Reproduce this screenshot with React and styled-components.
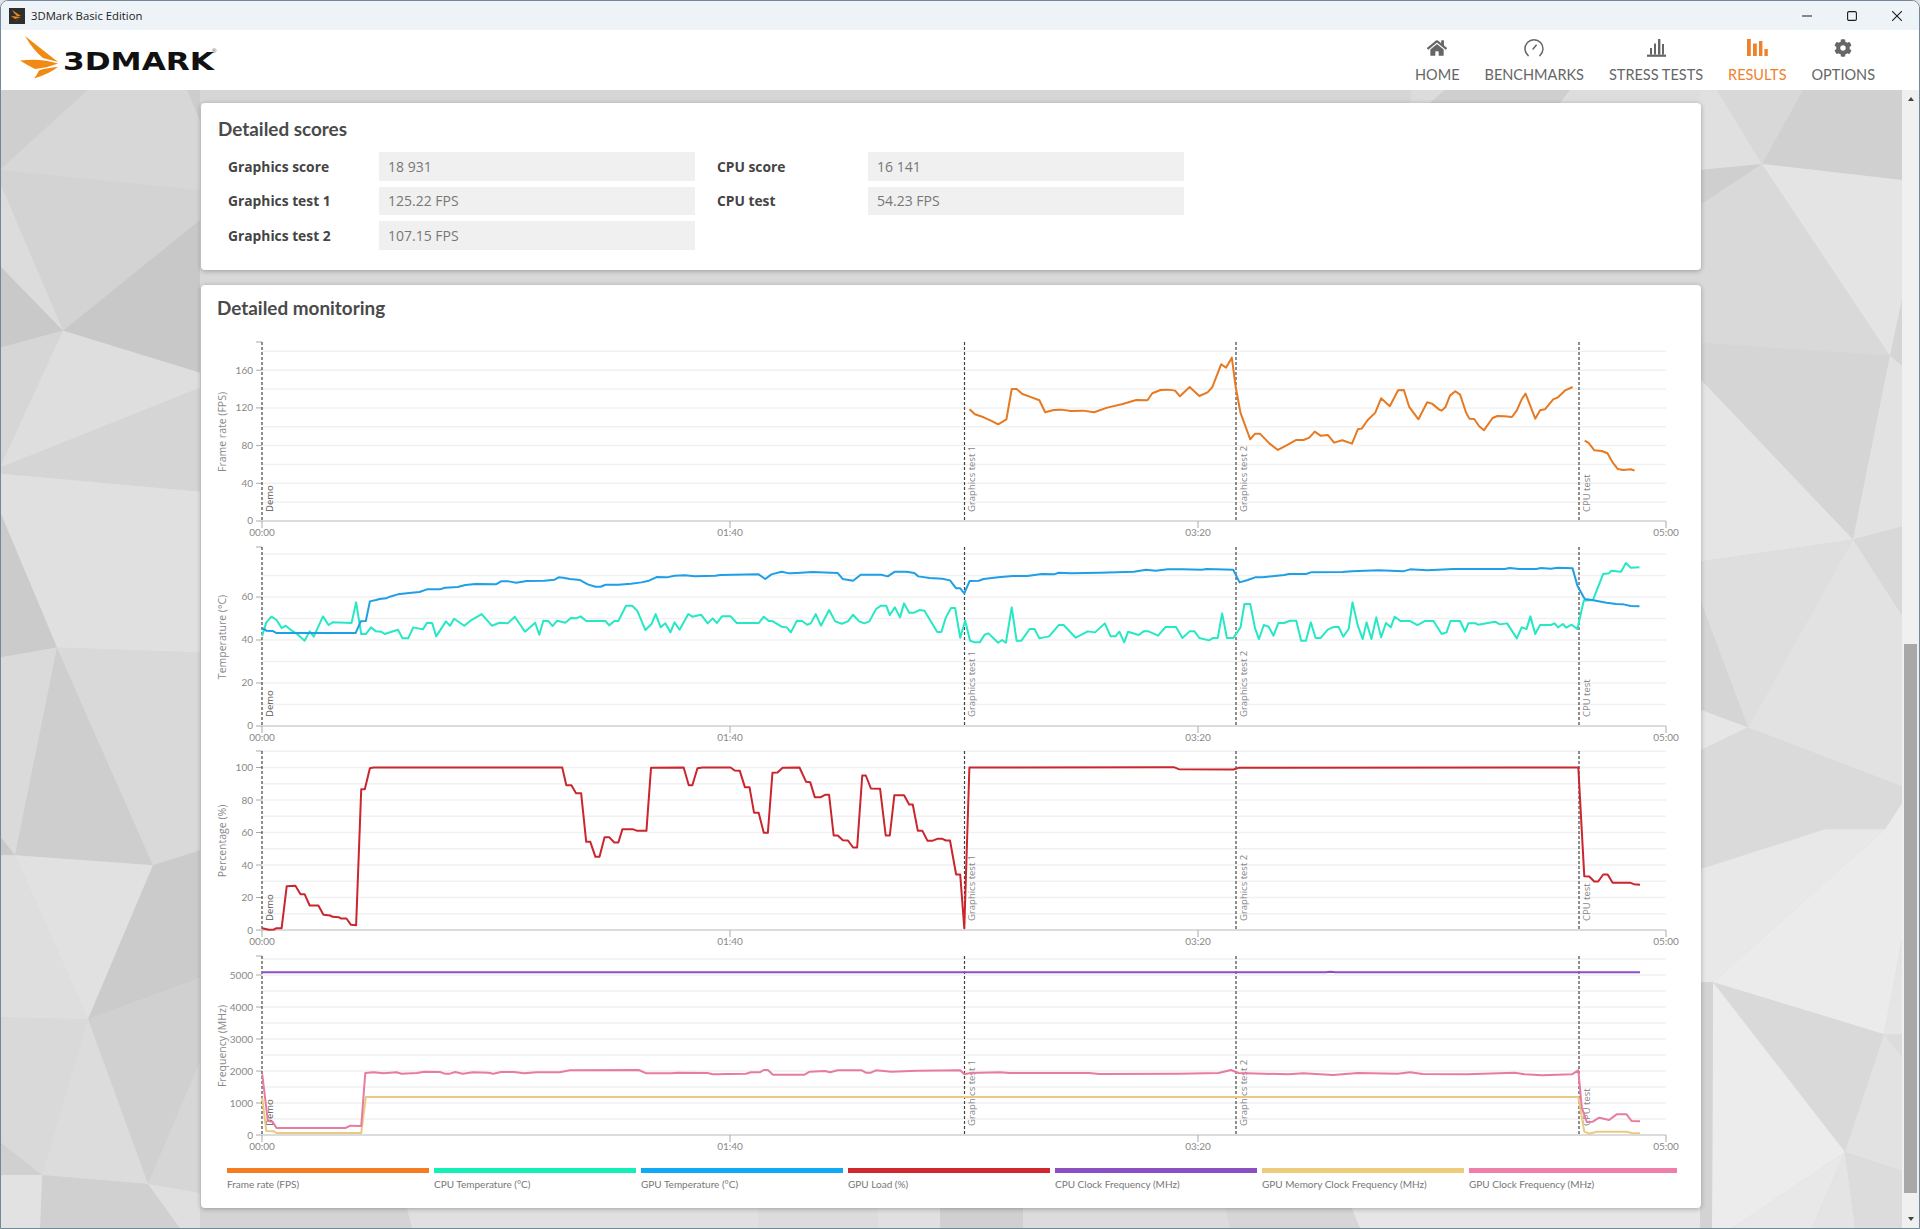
import React from "react";
import styled, { createGlobalStyle } from "styled-components";
import { FaHome, FaCog } from "react-icons/fa";

const GlobalStyle = createGlobalStyle`
html, body {
    margin: 0;
    padding: 0;
    background: #dfe3e8;
    overflow: hidden;
}
* {
    box-sizing: border-box;
}
`;

// background facets, in page pixels
const facets = [
    ["#cfcfcf", "0,90 88,90 0,170"],
    ["#d7d7d7", "88,90 187,90 200,121 200,190 0,170"],
    ["#cdcdcd", "187,90 200,90 200,121"],
    ["#d3d3d3", "0,170 200,190 200,220 63,331 0,183"],
    ["#dcdcdc", "0,183 63,331 0,266"],
    ["#c9c9c9", "0,266 63,331 0,348"],
    ["#c8c8c8", "63,331 200,220 200,373"],
    ["#d6d6d6", "0,348 63,331 0,468"],
    ["#dedede", "0,468 63,331 200,373 200,388"],
    ["#d5d5d5", "0,468 200,388 200,492 0,474"],
    ["#e0e0e0", "0,474 200,492 200,653 57,648 0,512"],
    ["#cbcbcb", "0,512 57,648 0,658"],
    ["#dadada", "0,658 57,648 15,856 0,837"],
    ["#cecece", "57,648 153,866 15,856"],
    ["#d9d9d9", "57,648 200,653 200,851 153,866"],
    ["#c9c9c9", "0,837 15,856 0,856"],
    ["#dedede", "0,856 15,856 88,1020 0,1018"],
    ["#e1e1e1", "15,856 153,866 88,1020"],
    ["#cbcbcb", "153,866 200,851 200,979 88,1020"],
    ["#d0d0d0", "88,1020 200,979 200,1063 148,1185"],
    ["#d9d9d9", "0,1018 88,1020 42,1176 0,1143"],
    ["#d0d0d0", "0,1143 42,1176 0,1176"],
    ["#dcdcdc", "88,1020 148,1185 42,1176"],
    ["#d6d6d6", "148,1185 200,1063 200,1194"],
    ["#d0d0d0", "42,1176 148,1185 180,1229 40,1229"],
    ["#e2e2e2", "0,1176 42,1176 40,1229 0,1229"],
    ["#dfdfdf", "148,1185 200,1194 200,1229 180,1229"],

    ["#d6d6d6", "200,90 1411,90 1411,103 200,103"],
    ["#dcdcdc", "1411,90 1445,90 1430,103 1411,103"],
    ["#cfcfcf", "1445,90 1570,90 1560,103 1430,103"],
    ["#dddddd", "1570,90 1700,90 1700,103 1560,103"],
    ["#d8d8d8", "200,268 1700,268 1700,288 200,288"],
    ["#d4d4d4", "200,1205 406,1205 412,1229 200,1229"],
    ["#e0e0e0", "406,1205 758,1205 758,1229 412,1229"],
    ["#dcdcdc", "758,1205 878,1205 878,1229 758,1229"],
    ["#e0e0e0", "878,1205 1023,1205 1023,1229 878,1229"],
    ["#d0d0d0", "940,1205 1023,1205 1023,1229 940,1229"],
    ["#dcdcdc", "1023,1205 1225,1205 1230,1229 1023,1229"],
    ["#d6d6d6", "1225,1205 1350,1205 1360,1229 1230,1229"],
    ["#e6e6e6", "1350,1205 1712,1205 1712,1229 1360,1229"],

    ["#e0e0e0", "1700,90 1717,90 1762,164 1700,170"],
    ["#d8d8d8", "1717,90 1803,90 1762,164"],
    ["#d0d0d0", "1803,90 1902,90 1902,180 1762,164"],
    ["#cfcfcf", "1700,170 1762,164 1700,205"],
    ["#d9d9d9", "1700,205 1762,164 1890,356 1700,343"],
    ["#e4e4e4", "1762,164 1902,180 1902,300 1890,356"],
    ["#d5d5d5", "1902,300 1890,356 1902,366"],
    ["#d5d5d5", "1700,343 1890,356 1853,540 1700,379"],
    ["#e5e5e5", "1700,379 1853,540 1700,562"],
    ["#e2e2e2", "1890,356 1902,366 1902,527 1853,540"],
    ["#d8d8d8", "1853,540 1902,527 1902,616"],
    ["#dedede", "1700,562 1853,540 1748,728 1700,600"],
    ["#d5d5d5", "1700,600 1748,728 1700,710"],
    ["#e6e6e6", "1700,710 1748,728 1700,751"],
    ["#e2e2e2", "1853,540 1902,616 1902,787 1748,728"],
    ["#dadada", "1700,751 1748,728 1902,787 1902,804 1885,830 1825,830 1702,870 1700,870"],
    ["#e8e8e8", "1700,870 1825,830 1885,830 1713,983 1700,983"],
    ["#ebebeb", "1885,830 1902,804 1902,940 1884,1035 1713,983"],
    ["#e5e5e5", "1902,940 1884,1035 1902,1040"],
    ["#d9d9d9", "1713,983 1884,1035 1845,1153"],
    ["#e2e2e2", "1884,1035 1902,1057 1902,1172 1845,1153"],
    ["#dcdcdc", "1884,1035 1902,1035 1902,1057"],
    ["#ececec", "1713,983 1845,1153 1732,1229 1712,1229"],
    ["#e8e8e8", "1845,1153 1812,1229 1732,1229"],
    ["#e4e4e4", "1845,1153 1855,1229 1812,1229"],
    ["#dcdcdc", "1845,1153 1902,1172 1902,1229 1855,1229"],
    ["#d3d3d3", "1700,983 1713,983 1712,1229 1700,1229"],
];

// curve points read off the graphs at a given x scale, turned into page pixels
const read = (x0, sx, y0, pts) => pts.map(([x, y]) => [x0 + x / sx, y0 + y / 3]);

const frameRate = [
    read(940, 2.063, 330, [[61,237],[72,252],[90,261],[105,271],[120,282],[137,267],[148,176],[158,176],[170,191],[185,199],[205,210],[217,246],[235,239],[250,238],[270,242],[295,241],[318,246],[345,232],[375,222],[405,209],[428,210],[438,189],[455,179],[470,178],[485,181],[495,198],[515,170],[535,197],[552,186],[562,170],[580,102],[590,112],[602,82],[610,170],[620,248],[640,327],[650,310],[660,310],[680,340],[697,359],[715,345],[735,329],[750,329],[762,322],[773,304],[785,316],[800,314],[813,337],[830,330],[850,340],[862,297],[870,295],[882,270],[898,247],[910,204],[928,228],[945,180],[957,179],[968,230],[987,267],[1005,216],[1015,220],[1030,238],[1035,241],[1043,230],[1052,196],[1063,183],[1073,193],[1085,246],[1092,265],[1102,266],[1112,287],[1122,300],[1140,263],[1150,257],[1165,258],[1180,260],[1190,240],[1200,207],[1208,190],[1228,265],[1238,240],[1248,237],[1265,207],[1275,201],[1290,180],[1305,170]]),
    read(940, 2.063, 330, [[1330,331],[1338,338],[1350,360],[1365,362],[1377,369],[1388,397],[1398,416],[1410,419],[1425,417],[1433,421]]),
];

const gpuTemp = [[
    ...read(200, 1.96, 280, [[122,1042],[130,1050],[143,1051],[150,1057],[305,1057],[315,1022],[325,1021],[333,962],[345,958],[352,955],[365,953],[372,948],[388,941],[410,937],[430,934],[445,926],[470,926],[480,921],[505,919],[520,913],[540,910],[580,911],[590,902],[605,902],[620,906],[640,901],[675,900],[695,897],[703,890],[712,891],[725,895],[745,898],[760,911],[775,918],[785,918],[795,912],[820,912],[845,909],[865,905],[880,900],[895,889],[915,890],[930,885],[950,884],[970,887],[1010,885],[1020,883],[1095,881],[1108,895],[1120,881],[1140,873],[1155,878],[1170,877],[1200,874],[1250,877],[1260,895],[1280,900],[1295,882],[1335,882],[1348,887],[1362,873],[1385,873],[1400,877],[1408,887],[1430,892],[1455,894],[1470,899],[1482,923],[1490,923],[1498,938]]),
    ...read(940, 2.063, 330, [[61,751],[80,750],[90,745],[120,740],[150,736],[180,736],[210,730],[235,731],[245,726],[270,728],[330,726],[400,723],[425,717],[445,720],[470,716],[500,716],[540,717],[550,715],[605,717],[618,755],[635,748],[650,740],[665,740],[710,733],[720,730],[755,730],[765,725],[830,724],[850,722],[905,719],[955,722],[970,716],[1005,719],[1060,715],[1165,715],[1175,712],[1195,715],[1230,715],[1240,712],[1260,714],[1275,711],[1305,713],[1315,765],[1330,805],[1345,808],[1375,816],[1395,820],[1410,821],[1425,826],[1443,827]]),
]];

const cpuTemp = [[
    ...read(200, 1.96, 280, [[122,1065],[130,1025],[140,1008],[150,1018],[160,1042],[168,1035],[180,1050],[192,1062],[205,1080],[215,1052],[223,1068],[241,1007],[252,1033],[260,1025],[297,1027],[306,965],[316,1060],[325,1060],[335,1040],[345,1052],[355,1053],[362,1060],[388,1047],[397,1073],[408,1073],[418,1040],[437,1046],[445,1026],[455,1027],[463,1067],[482,1022],[490,1035],[498,1014],[518,1035],[532,1018],[552,1000],[572,1035],[587,1026],[603,1028],[617,1008],[637,1053],[657,1026],[665,1062],[673,1020],[683,1021],[691,1036],[700,1020],[716,1026],[727,1012],[737,1013],[746,1007],[757,1021],[795,1021],[802,1034],[812,1021],[820,1021],[835,975],[847,975],[857,990],[873,1048],[885,1030],[893,1000],[903,1040],[912,1028],[922,1055],[930,1025],[940,1047],[957,1000],[965,1008],[982,1002],[995,1028],[1005,1013],[1013,1027],[1023,1007],[1040,1007],[1052,1027],[1095,1027],[1105,1008],[1115,1021],[1122,1021],[1140,1038],[1150,1040],[1158,1055],[1170,1020],[1180,1021],[1190,1032],[1197,1028],[1207,1000],[1217,1035],[1233,988],[1245,1022],[1258,1029],[1270,1022],[1280,1002],[1292,1022],[1302,1028],[1312,1022],[1325,985],[1335,975],[1345,975],[1352,1003],[1362,980],[1372,1010],[1380,968],[1390,996],[1400,996],[1410,988],[1420,990],[1445,1054],[1453,1054],[1462,1010],[1472,982],[1480,982],[1490,1071]]),
    ...read(940, 2.063, 330, [[52,870],[62,930],[72,935],[82,935],[92,912],[100,908],[120,936],[128,928],[136,936],[148,830],[158,930],[168,930],[185,895],[195,895],[205,923],[225,917],[245,883],[255,883],[280,921],[305,902],[320,905],[340,878],[352,917],[362,917],[370,903],[380,935],[388,903],[410,913],[420,902],[430,902],[450,915],[465,889],[487,889],[500,922],[515,902],[525,902],[535,922],[555,929],[563,922],[573,922],[582,848],[592,922],[605,922],[620,890],[628,820],[640,820],[650,893],[658,925],[668,883],[678,888],[688,915],[698,877],[710,877],[722,870],[735,870],[745,930],[755,930],[765,875],[775,922],[785,922],[800,897],[810,890],[822,888],[832,918],[843,895],[851,815],[862,885],[872,925],[880,875],[890,925],[900,860],[910,920],[920,877],[930,890],[938,858],[950,871],[970,871],[985,883],[1000,871],[1018,871],[1035,910],[1045,905],[1053,871],[1073,871],[1083,903],[1090,878],[1105,878],[1110,882],[1145,873],[1155,881],[1170,878],[1190,923],[1200,890],[1210,895],[1218,857],[1228,910],[1238,883],[1260,883],[1268,878],[1275,890],[1285,880],[1292,891],[1303,882],[1315,895],[1328,810],[1347,808],[1368,730],[1380,728],[1385,720],[1405,723],[1415,697],[1425,711],[1443,710]]),
]];

const gpuLoad = [[
    ...read(200, 1.96, 740, [[122,563],[135,568],[145,567],[150,563],[160,563],[170,437],[187,436],[197,461],[205,461],[215,495],[232,495],[242,523],[255,525],[260,529],[272,530],[276,534],[287,534],[296,553],[306,554],[316,146],[323,146],[333,83],[340,81],[710,81],[718,134],[728,134],[737,158],[747,158],[757,304],[765,304],[775,349],[783,349],[793,290],[802,290],[812,306],[820,306],[828,266],[848,266],[857,271],[875,271],[884,82],[948,81],[958,134],[965,134],[975,83],[985,81],[1040,81],[1048,90],[1058,91],[1068,140],[1077,140],[1086,217],[1095,217],[1105,277],[1113,277],[1122,97],[1132,96],[1142,82],[1175,81],[1188,124],[1196,125],[1205,170],[1217,170],[1225,163],[1233,163],[1242,285],[1250,285],[1260,299],[1270,300],[1280,321],[1288,321],[1298,105],[1305,105],[1315,144],[1333,145],[1344,285],[1352,285],[1361,164],[1380,164],[1390,192],[1397,192],[1407,271],[1416,271],[1426,301],[1435,301],[1445,295],[1455,295],[1462,300],[1470,300],[1482,402],[1490,402],[1498,563],[1508,81]]),
    ...read(940, 2.01, 740, [[470,80],[480,86],[590,87],[600,82],[1283,81],[1295,407],[1305,408],[1315,423],[1323,423],[1333,402],[1342,402],[1352,427],[1388,427],[1395,431],[1407,433]]),
]];

const cpuClock = [read(200, 1.96, 740, [[122,694],[1568,694]]).concat(read(940, 2.01, 740, [[775,694],[785,692],[795,694],[1407,694]]))];

const gpuMemClock = [[
    ...read(200, 1.96, 740, [[122,1070],[130,1170],[145,1171],[150,1176],[316,1176],[325,1068]]),
    ...read(940, 2.01, 740, [[1283,1068],[1295,1172],[1305,1178],[1320,1172],[1380,1172],[1390,1176],[1407,1177]]),
]];

const gpuClock = [[
    ...read(200, 1.96, 740, [[122,1000],[133,1140],[142,1142],[150,1161],[285,1161],[295,1154],[316,1155],[324,996],[340,994],[360,997],[385,994],[395,998],[425,996],[440,992],[470,993],[480,998],[490,998],[500,993],[515,998],[535,994],[565,995],[575,998],[590,993],[615,993],[635,997],[660,994],[705,994],[725,988],[860,987],[875,997],[925,997],[935,995],[995,996],[1005,1000],[1070,998],[1080,994],[1097,994],[1105,987],[1113,987],[1123,1001],[1185,1001],[1195,992],[1225,990],[1235,994],[1250,988],[1297,988],[1305,995],[1315,995],[1325,988],[1355,992],[1405,989],[1490,988],[1498,1000],[1510,996],[1530,995],[1568,994]]),
    ...read(940, 2.01, 740, [[140,996],[300,996],[320,999],[480,998],[560,996],[585,987],[600,996],[700,1000],[730,997],[790,1002],[840,996],[920,998],[945,994],[970,999],[1060,1000],[1155,995],[1175,1000],[1210,1003],[1270,1000],[1283,988],[1290,1100],[1300,1143],[1312,1142],[1325,1130],[1345,1137],[1360,1120],[1380,1120],[1390,1140],[1407,1141]]),
]];

const charts = [
    {
        title: "Frame rate (FPS)", baseline: 520.7, unit: 0.9425, tick: 40, maxTick: 160, grid: 20, maxGrid: 180,
        series: [{ color: "#e67a22", lines: frameRate }],
    },
    {
        title: "Temperature (°C)", baseline: 725.3, unit: 2.15, tick: 20, maxTick: 60, grid: 10, maxGrid: 80,
        series: [{ color: "#26e8c4", lines: cpuTemp }, { color: "#1f9fe6", lines: gpuTemp }],
    },
    {
        title: "Percentage (%)", baseline: 929.5, unit: 1.625, tick: 20, maxTick: 100, grid: 10, maxGrid: 110,
        series: [{ color: "#c9262e", lines: gpuLoad }],
    },
    {
        title: "Frequency (MHz)", baseline: 1134, unit: 0.032, tick: 1000, maxTick: 5000, grid: 500, maxGrid: 5500,
        series: [
            { color: "#8e4fc6", lines: cpuClock },
            { color: "#e9cb80", lines: gpuMemClock },
            { color: "#e77ba2", lines: gpuClock },
        ],
    },
];

const markers = [
    { x: 262, label: "Demo", dark: true },
    { x: 964.5, label: "Graphics test 1" },
    { x: 1236, label: "Graphics test 2" },
    { x: 1579, label: "CPU test" },
];

const timeTicks = [
    { x: 262, label: "00:00" },
    { x: 730, label: "01:40" },
    { x: 1198, label: "03:20" },
    { x: 1666, label: "05:00" },
];

const legend = [
    { color: "#f57c20", label: "Frame rate (FPS)" },
    { color: "#12f0b8", label: "CPU Temperature (°C)" },
    { color: "#10a9f5", label: "GPU Temperature (°C)" },
    { color: "#d0282e", label: "GPU Load (%)" },
    { color: "#8a4fc2", label: "CPU Clock Frequency (MHz)" },
    { color: "#eccb7a", label: "GPU Memory Clock Frequency (MHz)" },
    { color: "#ee7fa8", label: "GPU Clock Frequency (MHz)" },
];

const steps = (step, max) => {
    const out = [];
    for (let v = 0; v <= max; v += step) out.push(v);
    return out;
};

const Chart = ({ title, baseline, unit, tick, maxTick, grid, maxGrid, series }) => {
    const top = baseline - 179;
    const yOf = (v) => baseline - v * unit;
    return (
        <ChartSvg viewBox={`201 ${baseline - 185} 1500 204.5`}>
            {steps(grid, maxGrid).slice(1).map((v) => (
                <line key={v} x1="262" x2="1666" y1={yOf(v)} y2={yOf(v)} stroke="#f1f1f1" strokeWidth="1.5" />
            ))}
            <line x1="256" x2="262" y1={top} y2={top} stroke="#aaa" />
            {steps(tick, maxTick).map((v) => (
                <g key={v}>
                    <line x1="256" x2="262" y1={yOf(v)} y2={yOf(v)} stroke="#aaa" />
                    <TickText x="253" y={yOf(v) + 3.5} textAnchor="end">{v}</TickText>
                </g>
            ))}
            <line x1="262" x2="1666" y1={baseline} y2={baseline} stroke="#dcdcdc" strokeWidth="2" />
            {timeTicks.map((t) => (
                <g key={t.label}>
                    <line x1={t.x} x2={t.x} y1={baseline} y2={baseline + 7} stroke="#aaa" />
                    <TickText x={t.x} y={baseline + 15} textAnchor="middle">{t.label}</TickText>
                </g>
            ))}
            <AxisTitle transform={`translate(226 ${baseline - 89}) rotate(-90)`} textAnchor="middle">{title}</AxisTitle>
            {markers.map((m) => (
                <g key={m.label}>
                    <line x1={m.x} x2={m.x} y1={top} y2={baseline} stroke="#444" strokeWidth="1.2" strokeDasharray="3 2" />
                    <MarkerText $dark={m.dark} transform={`translate(${m.x + 10.5} ${baseline - 9}) rotate(-90)`}>{m.label}</MarkerText>
                </g>
            ))}
            {series.map((s) =>
                s.lines.map((pts, i) => (
                    <polyline
                        key={s.color + i}
                        points={pts.map((p) => p.join(",")).join(" ")}
                        fill="none"
                        stroke={s.color}
                        strokeWidth="2"
                        strokeLinejoin="round"
                    />
                ))
            )}
        </ChartSvg>
    );
};

const GaugeIcon = () => (
    <svg width="20" height="19" viewBox="0 0 20 19" fill="none" stroke="currentColor" strokeWidth="1.5">
        <path d="M4.2 17.6 A9 9 0 1 1 15.8 17.6" strokeLinecap="round" />
        <path d="M8.6 11.4 L12.6 6.8" />
    </svg>
);

const StressIcon = () => (
    <svg width="19" height="18" viewBox="0 0 19 18" fill="currentColor">
        <rect x="0" y="15.6" width="19" height="2.2" />
        <rect x="3" y="9" width="2" height="6.6" />
        <rect x="7" y="4.5" width="2" height="11" />
        <rect x="11" y="0" width="2.4" height="15.6" />
        <rect x="15" y="5" width="2" height="10.6" />
    </svg>
);

const ResultsIcon = () => (
    <svg width="21" height="18" viewBox="0 0 21 18" fill="currentColor">
        <rect x="0" y="0" width="3.8" height="17" />
        <rect x="6" y="4.5" width="3.8" height="12.5" />
        <rect x="12" y="2" width="3.4" height="15" />
        <rect x="17.4" y="10" width="3.4" height="7" />
    </svg>
);

const navItems = [
    { label: "HOME", icon: <FaHome size={20} /> },
    { label: "BENCHMARKS", icon: <GaugeIcon /> },
    { label: "STRESS TESTS", icon: <StressIcon /> },
    { label: "RESULTS", icon: <ResultsIcon />, active: true },
    { label: "OPTIONS", icon: <FaCog size={18} /> },
];

const Logo = () => (
    <svg width="230" height="60" viewBox="0 30 230 60">
        <g fill="#f08a14">
            <path d="M24 36 L57 62 L42 58 Q32 50 24 36 Z" />
            <path d="M19 60.5 Q40 58 57 63.5 Q45 68 34 69 Q26 65 19 60.5 Z" />
            <path d="M33 78.5 Q48 74 57 67 Q44 68 38 70.5 Q36 75 33 78.5 Z" />
        </g>
        <LogoText x="62" y="70" textLength="151" lengthAdjust="spacingAndGlyphs">3DMARK</LogoText>
        <LogoMark x="211" y="53">®</LogoMark>
    </svg>
);

const scoresLeft = [
    ["Graphics score", "18 931"],
    ["Graphics test 1", "125.22 FPS"],
    ["Graphics test 2", "107.15 FPS"],
];

const scoresRight = [
    ["CPU score", "16 141"],
    ["CPU test", "54.23 FPS"],
];

const ScoreColumn = ({ rows }) => (
    <ScoreCol>
        {rows.map(([label, value]) => (
            <ScoreRow key={label}>
                <ScoreLabel>{label}</ScoreLabel>
                <ScoreValue>{value}</ScoreValue>
            </ScoreRow>
        ))}
    </ScoreCol>
);

const App = () => {
    return (
        <>
            <GlobalStyle />
            <Window>
                <TitleBar>
                    <AppIcon>
                        <svg width="16" height="16" viewBox="0 0 16 16">
                            <rect width="16" height="16" fill="#2e2e2e" />
                            <path d="M3 2 L12 8 L8 8 L5 5 Z M2 8 L12 9 L6 11 Z M5 14 L12 10 L8 12 Z" fill="#f08a14" />
                        </svg>
                    </AppIcon>
                    <WindowTitle>3DMark Basic Edition</WindowTitle>
                    <WindowControls>
                        <ControlIcon viewBox="0 0 10 10"><path d="M0 5 H10" /></ControlIcon>
                        <ControlIcon viewBox="0 0 10 10"><rect x=".6" y=".6" width="8.8" height="8.8" rx="1.4" /></ControlIcon>
                        <ControlIcon viewBox="0 0 10 10"><path d="M0 0 L10 10 M10 0 L0 10" /></ControlIcon>
                    </WindowControls>
                </TitleBar>
                <Header>
                    <Logo />
                    <Nav>
                        {navItems.map((item) => (
                            <NavItem key={item.label} $active={item.active}>
                                <NavIcon>{item.icon}</NavIcon>
                                {item.label}
                            </NavItem>
                        ))}
                    </Nav>
                </Header>
                <Body>
                    <Viewport>
                        <Backdrop viewBox="1 90 1901 1139" preserveAspectRatio="none">
                            <rect x="0" y="90" width="1920" height="1139" fill="#d8d8d8" />
                            {facets.map(([fill, points]) => (
                                <polygon key={points} fill={fill} points={points} />
                            ))}
                        </Backdrop>
                        <ScoresCard>
                            <CardTitle>Detailed scores</CardTitle>
                            <ScoreGrid>
                                <ScoreColumn rows={scoresLeft} />
                                <ScoreColumn rows={scoresRight} />
                            </ScoreGrid>
                        </ScoresCard>
                        <MonitorCard>
                            <MonitorTitle>Detailed monitoring</MonitorTitle>
                            <Charts>
                                {charts.map((c) => (
                                    <Chart key={c.title} {...c} />
                                ))}
                            </Charts>
                            <Legend>
                                {legend.map((l) => (
                                    <LegendItem key={l.label}>
                                        <Swatch $color={l.color} />
                                        {l.label}
                                    </LegendItem>
                                ))}
                            </Legend>
                        </MonitorCard>
                    </Viewport>
                    <ScrollTrack>
                        <ScrollButton><ArrowUp /></ScrollButton>
                        <ScrollThumb />
                        <ScrollButton $bottom><ArrowDown /></ScrollButton>
                    </ScrollTrack>
                </Body>
            </Window>
        </>
    );
};

const Window = styled.div`
width: 1920px;
height: 1229px;
display: flex;
flex-direction: column;
border: 1px solid #74879b;
border-radius: 8px 8px 0 0;
overflow: hidden;
background: #fff;
`;

const TitleBar = styled.div`
height: 29px;
display: flex;
align-items: center;
padding-left: 8px;
background: #eef3f8;
`;

const AppIcon = styled.div`
width: 16px;
height: 16px;
display: flex;
`;

const WindowTitle = styled.div`
margin-left: 6px;
font: 11.3px "Open Sans", sans-serif;
color: #222;
`;

const WindowControls = styled.div`
margin-left: auto;
display: flex;
gap: 35px;
padding-right: 17px;
`;

const ControlIcon = styled.svg`
width: 10px;
height: 10px;
fill: none;
stroke: #1c1c1c;
stroke-width: 1.1;
`;

const Header = styled.header`
height: 60px;
display: flex;
align-items: center;
justify-content: space-between;
background: #fff;
`;

const LogoText = styled.text`
font: 700 25px "DejaVu Sans", sans-serif;
fill: #111;
`;

const LogoMark = styled.text`
font: 6px "Liberation Sans", sans-serif;
fill: #444;
`;

const Nav = styled.nav`
display: flex;
gap: 25px;
padding-right: 44px;
`;

const NavItem = styled.div`
display: flex;
flex-direction: column;
align-items: center;
font: 14.5px Lato, sans-serif;
color: ${(p) => (p.$active ? "#f0812c" : "#666")};
`;

const NavIcon = styled.div`
height: 20px;
display: flex;
align-items: center;
justify-content: center;
margin: 0 0 8px;
`;

const Body = styled.div`
flex: 1;
min-height: 0;
display: flex;
`;

const Viewport = styled.main`
position: relative;
flex: 1;
padding: 13px 0 0 200px;
overflow: hidden;
`;

const Backdrop = styled.svg`
position: absolute;
inset: 0;
width: 100%;
height: 100%;
`;

const Card = styled.section`
position: relative;
width: 1500px;
background: #fff;
border-radius: 4px;
box-shadow: 0 1px 5px rgba(0, 0, 0, 0.28);
`;

const ScoresCard = styled(Card)`
height: 167px;
padding: 15px 0 0 17px;
`;

const MonitorCard = styled(Card)`
height: 923px;
margin-top: 15px;
padding-top: 12px;
`;

const CardTitle = styled.h2`
margin: 0;
font: 700 18.9px/22px Lato, sans-serif;
color: #4a4a4a;
`;

const MonitorTitle = styled(CardTitle)`
margin-left: 16px;
`;

const ScoreGrid = styled.div`
display: flex;
gap: 22px;
margin-top: 12px;
padding-left: 10px;
`;

const ScoreCol = styled.div`
width: 467px;
display: flex;
flex-direction: column;
gap: 6px;
`;

const ScoreRow = styled.div`
display: flex;
align-items: center;
height: 28.6px;
`;

const ScoreLabel = styled.div`
width: 151px;
font: 700 13.8px "Open Sans", sans-serif;
color: #444;
`;

const ScoreValue = styled.div`
flex: 1;
height: 100%;
display: flex;
align-items: center;
padding-left: 9px;
background: #f0f0f0;
font: 14px "Open Sans", sans-serif;
color: #777;
`;

const Charts = styled.div`
margin-top: 17px;
display: flex;
flex-direction: column;
`;

const ChartSvg = styled.svg`
display: block;
width: 1500px;
height: 204.5px;
`;

const TickText = styled.text`
font: 10px Lato, sans-serif;
fill: #888;
`;

const AxisTitle = styled.text`
font: 10.5px "Open Sans", sans-serif;
fill: #888;
`;

const MarkerText = styled.text`
font: 9.5px "Open Sans", sans-serif;
fill: ${(p) => (p.$dark ? "#555" : "#888")};
`;

const Legend = styled.div`
display: grid;
grid-template-columns: repeat(6, 201.5px) 208px;
column-gap: 5.5px;
margin-top: 14px;
padding-left: 26px;
`;

const LegendItem = styled.div`
font: 10px Lato, sans-serif;
color: #777;
`;

const Swatch = styled.div`
height: 5px;
margin-bottom: 5px;
background: ${(p) => p.$color};
`;

const ScrollTrack = styled.aside`
position: relative;
width: 17px;
display: flex;
flex-direction: column;
align-items: center;
background: #f0f0f0;
`;

const ScrollButton = styled.div`
height: ${(p) => (p.$bottom ? "35px" : "18px")};
width: 100%;
display: flex;
justify-content: center;
align-items: ${(p) => (p.$bottom ? "flex-end" : "center")};
padding-bottom: ${(p) => (p.$bottom ? "7px" : "0")};
`;

const ScrollThumb = styled.div`
margin-top: auto;
width: 13px;
height: 549px;
background: #a8a8a8;
`;

const ArrowUp = styled.div`
width: 0;
height: 0;
border-left: 3.5px solid transparent;
border-right: 3.5px solid transparent;
border-bottom: 4px solid #444;
`;

const ArrowDown = styled.div`
width: 0;
height: 0;
border-left: 3.5px solid transparent;
border-right: 3.5px solid transparent;
border-top: 4px solid #444;
`;

export default App;
